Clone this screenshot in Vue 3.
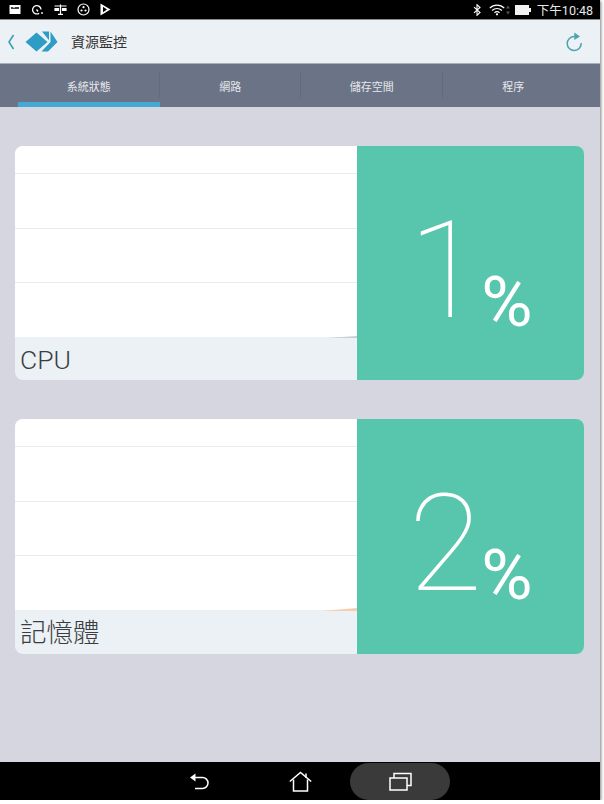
<template>
  <div class="frame">
    <!-- status bar -->
    <div class="status-bar">
      <div class="status-left">
        <svg width="12" height="11" viewBox="0 0 12 11"><rect x="0.5" y="1" width="11" height="9" fill="#fff" /><path d="M2 3.2h2l1 1 1-1h4v1.6H2z" fill="#000" /></svg>
        <svg width="13" height="11" viewBox="0 0 13 11" fill="none" stroke="#fff" stroke-width="1.3"><path d="M8.2 9.2A4.2 4.2 0 1 1 10 5.5" /><path d="M5.5 5.5l1.5 2" /><circle cx="11" cy="9" r="0.9" fill="#fff" stroke="none" /></svg>
        <svg width="13" height="11" viewBox="0 0 13 11" fill="none" stroke="#fff" stroke-width="1.2"><path d="M0.5 2h12M6.500 0.500v10M4 10.300h5" /><path d="M1 4.500h3.500v2H1zM8.500 4.500H12v2H8.500z" fill="#fff" /></svg>
        <svg width="13" height="13" viewBox="0 0 13 13" fill="none"><circle cx="6.5" cy="6.500" r="5.500" stroke="#fff" stroke-width="1.2" /><circle cx="4.500" cy="7.500" r="1.100" fill="#fff" /><circle cx="8.500" cy="7.500" r="1.100" fill="#fff" /><circle cx="6.500" cy="4.200" r="1.100" fill="#fff" /></svg>
        <svg width="11" height="13" viewBox="0 0 11 13"><path d="M0.500 0.500L10.500 6.500L0.500 12.500Z" fill="#fff" /><path d="M3 3.800L7 6.500L3 9.200Z" fill="#000" /></svg>
      </div>
      <div class="status-right">
        <svg width="8" height="12" viewBox="0 0 8 12" fill="none" stroke="#fff" stroke-width="1.1"><path d="M1 3.200l6 5.300-3 2.800V0.700l3 2.800-6 5.300" /></svg>
        <svg class="wifi" width="16" height="12" viewBox="0 0 17 12" fill="none" stroke="#fff" stroke-width="1.3"><path d="M0.800 4A11 11 0 0 1 16.200 4" /><path d="M3.300 6.500A7.500 7.500 0 0 1 13.700 6.500" /><path d="M5.800 9A4 4 0 0 1 11.200 9" /><circle cx="8.500" cy="10.600" r="1.200" fill="#fff" stroke="none" /></svg>
        <svg class="arrows" width="4" height="10" viewBox="0 0 4 10"><path d="M2 0.500L4 3.500H0ZM2 9.500L0 6.500H4Z" fill="#555" /></svg>
        <svg class="battery" width="16" height="10" viewBox="0 0 16 10"><rect x="0" y="0" width="14" height="10" fill="#f2f2f2" /><rect x="14" y="3" width="2" height="4" fill="#f2f2f2" /></svg>
        <span class="clock">下午10:48</span>
      </div>
    </div>

    <!-- title bar -->
    <header class="title-bar">
      <svg class="back" width="8" height="16" viewBox="0 0 8 16" fill="none" stroke="#3d9fb8" stroke-width="1.600"><path d="M6.500 1L2 8l4.500 7" /></svg>
      <svg class="logo" width="33" height="24" viewBox="0 0 33 24">
        <path d="M0.500 12L11.500 2.500L22.500 12L11.500 21.500Z" fill="#2e9cc4" />
        <path d="M17 1.500h7v8.700Z" fill="#2e9cc4" />
        <path d="M25.500 1.500L32.500 12L23 21.500H16.500L25.500 12Z" fill="#2e9cc4" />
      </svg>
      <span class="title">資源監控</span>
      <svg class="refresh" width="18" height="20" viewBox="0 0 18 20" fill="none"><path d="M9.500 4.500A7 7 0 1 0 16.200 11" stroke="#4ba3ad" stroke-width="1.500" /><path d="M9.300 0.500L15 4.400L9.300 8Z" fill="#4ba3ad" /></svg>
    </header>

    <!-- tabs -->
    <nav class="tabs">
      <div v-for="(tab, i) in tabs" :key="tab" class="tab" :class="{ active: i === 0 }">{{ tab }}</div>
    </nav>

    <main class="content">
      <section v-for="card in cards" :key="card.label" class="card">
        <div class="card-left">
          <div class="chart">
            <div v-for="n in 3" :key="n" class="grid-row"></div>
            <svg class="spark" width="60" height="5" viewBox="0 0 60 5"><path :d="card.spark" :fill="card.sparkColor" /></svg>
          </div>
          <div class="card-label">{{ card.label }}</div>
        </div>
        <div class="card-value">
          <span class="digit">{{ card.value }}</span><span class="percent">%</span>
        </div>
      </section>
    </main>

    <!-- nav bar -->
    <footer class="nav-bar">
      <svg class="nav-back" width="22" height="20" viewBox="0 0 22 20" fill="none" stroke="#fff" stroke-width="1.500"><path d="M5 6.500H13.500A5.500 5.500 0 0 1 13.500 17.500H6" /><path d="M1 6.500L6.500 2.500V10.500Z" fill="#fff" stroke="none" /></svg>
      <svg class="nav-home" width="23" height="21" viewBox="0 0 23 21" fill="none" stroke="#fff" stroke-width="1.500"><path d="M0.800 10.500L11.500 1.500L22.200 10.500" /><path d="M4.500 8.500V20H18.500V8.500" /><path d="M17 2.500V7" /></svg>
      <div class="nav-recents">
        <svg width="23" height="19" viewBox="0 0 23 19" fill="none" stroke="#fff" stroke-width="1.500"><rect x="1" y="6" width="17" height="12" /><path d="M5 6V1.500H22V13.500H18" /></svg>
      </div>
    </footer>
  </div>
</template>

<script setup>
const tabs = ['系統狀態', '網路', '儲存空間', '程序']

const cards = [
  { label: 'CPU', value: 1, spark: 'M30 5L60 3V5Z', sparkColor: '#c8cbdc' },
  { label: '記憶體', value: 2, spark: 'M24 5L60 2V5Z', sparkColor: '#f3cfae' }
]
</script>

<style scoped>
.frame {
  width: 600px;
  height: 800px;
  display: flex;
  flex-direction: column;
  background: #d6d6e1;
  box-shadow: 1px 1px 3px rgba(0, 0, 0, 0.5);
  font-family: Roboto, "Noto Sans CJK TC", sans-serif;
}

.status-bar {
  height: 19px;
  background: #000;
  border-bottom: 1px solid #8a8a8a;
  display: flex;
  align-items: center;
  justify-content: space-between;
  padding: 0 7px 0 9px;
  flex-shrink: 0;
}

.status-left,
.status-right {
  display: flex;
  align-items: center;
}

.status-left {
  gap: 10px;
}

.wifi {
  margin-left: 8px;
}

.arrows {
  margin-left: 1px;
}

.battery {
  margin-left: 5px;
}

.clock {
  margin-left: 6px;
  margin-top: 2px;
  color: #e8e8e8;
  font-size: 12.500px;
  line-height: 17px;
}

.title-bar {
  height: 43px;
  background: #ecf1f5;
  border-bottom: 1px solid #a9aebb;
  display: flex;
  align-items: center;
  padding-left: 7px;
  padding-right: 17px;
  flex-shrink: 0;
}

.logo {
  margin-left: 10px;
}

.title {
  margin-left: 13px;
  margin-bottom: 2px;
  font-size: 14px;
  color: #333;
}

.refresh {
  margin-left: auto;
}

.tabs {
  height: 43px;
  background: #6b7386;
  display: grid;
  grid-template-columns: repeat(4, 1fr);
  padding: 0 16px 0 18px;
  flex-shrink: 0;
}

.tab {
  position: relative;
  display: flex;
  align-items: center;
  justify-content: center;
  color: #e6e8ec;
  font-size: 11px;
}

.tab:not(:last-child)::after {
  content: "";
  position: absolute;
  right: 0;
  top: 8px;
  bottom: 9px;
  width: 1px;
  background: #626a7c;
}

.tab.active::before {
  content: "";
  position: absolute;
  left: 0;
  right: 0;
  bottom: 0;
  height: 5px;
  background: #45a9d3;
}

.content {
  flex: 1;
  display: flex;
  flex-direction: column;
  gap: 39px;
  padding: 39px 16px 0 15px;
}

.card {
  height: 234px;
  display: flex;
  border-radius: 8px;
  overflow: hidden;
}

.card + .card {
  height: 235px;
}

.card-left {
  width: 342px;
  display: flex;
  flex-direction: column;
  background: #ecf1f5;
}

.chart {
  position: relative;
  box-sizing: border-box;
  height: 191px;
  padding-top: 27px;
  background: #fff;
}

.grid-row {
  box-sizing: border-box;
  height: 54.500px;
  border-top: 1px solid #ebebee;
}

.spark {
  position: absolute;
  right: 0;
  bottom: -1px;
}

.card-label {
  padding: 5px 0 0 5px;
  font-size: 26.500px;
  font-weight: 300;
  line-height: 36px;
  color: #3a3e42;
}

.card-value {
  flex: 1;
  display: flex;
  align-items: baseline;
  justify-content: center;
  padding-top: 8px;
  background: #58c6ad;
  color: #fff;
  line-height: 234px;
}

.digit {
  font-size: 135px;
  font-weight: 100;
}

.percent {
  margin-left: -1px;
  font-size: 70px;
  font-weight: 400;
  position: relative;
  top: 9px;
}

.nav-bar {
  height: 38px;
  background: #000;
  display: flex;
  align-items: center;
  flex-shrink: 0;
}

.nav-back {
  margin-left: 189px;
}

.nav-home {
  margin-left: 78px;
}

.nav-recents {
  margin-left: 38px;
  width: 100px;
  height: 37px;
  border-radius: 19px;
  background: #3a3a3a;
  display: flex;
  align-items: center;
  justify-content: center;
}
</style>

<style>
html,
body {
  background: #fff;
}
</style>
